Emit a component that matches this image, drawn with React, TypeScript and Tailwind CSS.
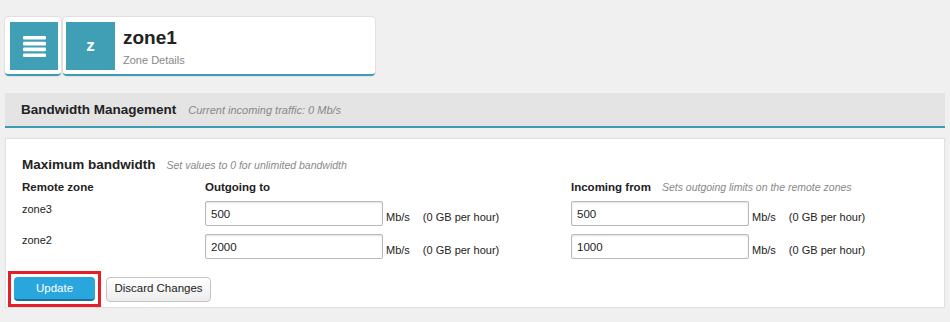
import React from "react";

function Hamburger() {
  return (
    <svg width="23" height="21" viewBox="0 0 23 21">
      <rect x="0" y="0" width="23" height="3.6" rx="1" fill="#fff" />
      <rect x="0" y="5.8" width="23" height="3.6" rx="1" fill="#fff" />
      <rect x="0" y="11.6" width="23" height="3.6" rx="1" fill="#fff" />
      <rect x="0" y="17.4" width="23" height="3.6" rx="1" fill="#fff" />
    </svg>
  );
}

function RateInput({ value }: { value: string }) {
  return (
    <div className="flex items-end h-[25px]">
      <input
        readOnly
        value={value}
        className="w-[178px] h-[25px] border border-[#b9b9b9] rounded-[2px] bg-white pl-[5px] text-[11.5px] text-[#222] shadow-[inset_0_1px_2px_rgba(0,0,0,0.12)] outline-none"
      />
      <span className="ml-[3px] mb-[1px] leading-[16px] text-[11px] text-[#222]">Mb/s</span>
      <span className="ml-[13px] mb-[1px] leading-[16px] text-[11px] text-[#222]">(0 GB per hour)</span>
    </div>
  );
}

export default function App() {
  return (
    <div className="min-h-[322px] w-[950px] bg-[#f0f0f0] font-['Liberation_Sans',Arial,sans-serif] text-[#222] pt-[17px] pb-[16px]">
      {/* Header cards */}
      <div className="flex pl-[5px]">
        <div className="h-[59px] w-[56px] bg-white rounded-[4px] border-b-2 border-b-[#3e9db4] shadow-[0_0_1px_1px_rgba(0,0,0,0.07)] pt-[5px] pl-[5px]">
          <div className="w-[48px] h-[48px] bg-[#409fb5] flex items-center justify-center">
            <Hamburger />
          </div>
        </div>
        <div className="ml-[2px] h-[59px] w-[312px] bg-white rounded-[4px] border-b-2 border-b-[#3e9db4] shadow-[0_0_1px_1px_rgba(0,0,0,0.07)] pt-[5px] pl-[3px] flex items-start">
          <div className="w-[49px] h-[48px] bg-[#409fb5] flex items-center justify-center text-white font-bold text-[17px]">
            z
          </div>
          <div className="ml-[8px] flex flex-col">
            <div className="text-[19px] font-bold leading-[22px] mt-[5px] text-[#222]">zone1</div>
            <div className="text-[11px] leading-[14px] mt-[4px] text-[#888]">Zone Details</div>
          </div>
        </div>
      </div>

      {/* Bandwidth Management bar */}
      <div className="mt-[17px] ml-[5px] w-[940px] h-[35px] bg-[#e4e4e4] border-b-2 border-b-[#3a9bb3] flex items-center pl-[16px] pt-[1px]">
        <span className="text-[13.5px] font-bold text-[#222]">Bandwidth Management</span>
        <span className="ml-[12px] text-[11px] italic text-[#888]">Current incoming traffic: 0 Mb/s</span>
      </div>

      {/* Panel */}
      <div className="mt-[11px] ml-[6px] w-[938px] bg-white shadow-[0_0_1px_1px_rgba(0,0,0,0.06)] pl-[16px] pt-[18px]">
        <div className="flex items-baseline h-[16px] leading-[16px]">
          <span className="text-[13.5px] font-bold text-[#222]">Maximum bandwidth</span>
          <span className="ml-[11px] text-[10.5px] italic text-[#888]">Set values to 0 for unlimited bandwidth</span>
        </div>

        <div className="grid grid-cols-[183px_366px_1fr] mt-[7px]">
          <div className="h-[14px] text-[11.5px] font-bold leading-[14px]">Remote zone</div>
          <div className="h-[14px] text-[11.5px] font-bold leading-[14px]">Outgoing to</div>
          <div className="h-[14px] flex items-baseline leading-[14px]">
            <span className="text-[11.5px] font-bold">Incoming from</span>
            <span className="ml-[11px] text-[10.5px] italic text-[#888]">Sets outgoing limits on the remote zones</span>
          </div>

          <div className="mt-[7px] h-[25px] text-[11px] leading-[16px]">zone3</div>
          <div className="mt-[7px]"><RateInput value="500" /></div>
          <div className="mt-[7px]"><RateInput value="500" /></div>

          <div className="mt-[8px] h-[25px] text-[11px] leading-[12px]">zone2</div>
          <div className="mt-[8px]"><RateInput value="2000" /></div>
          <div className="mt-[8px]"><RateInput value="1000" /></div>
        </div>

        <div className="flex items-center h-[36px] mt-[12px] -ml-[14px] -mb-[4px]">
          <div className="border-[3px] border-[#e61e27] p-[3px]">
            <button className="block w-[81px] h-[24px] rounded-[4px] bg-[#2aa6de] border-b-2 border-b-[#1b6f99] text-white text-[11.5px] leading-[20px]">
              Update
            </button>
          </div>
          <button className="ml-[5px] w-[105px] h-[25px] rounded-[4px] bg-gradient-to-b from-white to-[#ececec] border border-[#c4c4c4] text-[11.5px] text-[#222]">
            Discard Changes
          </button>
        </div>
      </div>
    </div>
  );
}
